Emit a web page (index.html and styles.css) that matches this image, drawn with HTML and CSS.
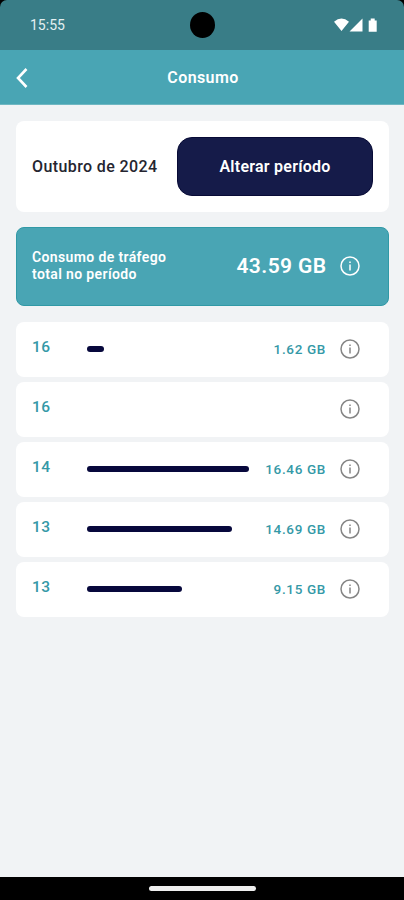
FILE: index.html
```
<!DOCTYPE html>
<html lang="pt">
<head>
<meta charset="utf-8">
<title>Consumo</title>
<link rel="stylesheet" href="styles.css">
</head>
<body>
<svg class="defs" width="0" height="0">
  <symbol id="info" viewBox="0 0 20 20">
    <circle cx="10" cy="10" r="9" fill="none" stroke="currentColor" stroke-width="1.5"/>
    <path d="M10 8.600v5.800M10 5.400v1.700" fill="none" stroke="currentColor" stroke-width="1.5"/>
  </symbol>
</svg>
<div class="screen">
  <div class="status">
    <span class="time">15:55</span>
    <span class="camera"></span>
    <svg class="signals" width="44" height="16" viewBox="0 0 44 16">
      <path d="M0 4.700Q7.500-1.700 15 4.700L7.500 13.900ZM15.500 14.500 28.500 1.500V14.500ZM34.700 3.400h2V1.400h4v2h2v11.400h-8Z" fill="#fff"/>
    </svg>
  </div>
  <header class="header">
    <svg class="back" width="12" height="20" viewBox="0 0 12 20"><path d="M10.500 1 2 10l8.500 9" fill="none" stroke="#fff" stroke-width="2.600"/></svg>
    <h1 class="title">Consumo</h1>
  </header>
  <main class="content">
    <section class="period">
      <span class="month">Outubro de 2024</span>
      <button class="change">Alterar período</button>
    </section>
    <section class="total">
      <span class="label">Consumo de tráfego<br>total no período</span>
      <span class="sum">43.59 GB</span>
      <svg class="info"><use href="#info"/></svg>
    </section>
    <section class="days">
      <div class="day"><span class="num">16</span><span class="track"><span class="bar" style="width:17px"></span></span><span class="gb">1.62 GB</span><svg class="info"><use href="#info"/></svg></div>
      <div class="day"><span class="num">16</span><span class="track"></span><span class="gb"></span><svg class="info"><use href="#info"/></svg></div>
      <div class="day"><span class="num">14</span><span class="track"><span class="bar" style="width:162px"></span></span><span class="gb">16.46 GB</span><svg class="info"><use href="#info"/></svg></div>
      <div class="day"><span class="num">13</span><span class="track"><span class="bar" style="width:145px"></span></span><span class="gb">14.69 GB</span><svg class="info"><use href="#info"/></svg></div>
      <div class="day"><span class="num">13</span><span class="track"><span class="bar" style="width:95px"></span></span><span class="gb">9.15 GB</span><svg class="info"><use href="#info"/></svg></div>
    </section>
  </main>
  <div class="nav"><span class="handle"></span></div>
</div>
</body>
</html>
```
FILE: styles.css
```
* { box-sizing: border-box; }
body { margin: 0; background: #000; font-family: Roboto, sans-serif; }
.defs { display: block; }
.screen { width: 404px; height: 900px; display: flex; flex-direction: column; overflow: hidden; border-radius: 7px 7px 0 0; }
.status { position: relative; height: 50px; flex: none; background: #397d87; display: flex; align-items: center; justify-content: space-between; padding: 0 26px 0 30px; }
.time { color: #e4f0f2; font-size: 14px; font-weight: 400; }
.camera { position: absolute; left: 190px; top: 12px; width: 25px; height: 26px; border-radius: 50%; background: #000; }
.header { height: 55px; flex: none; background: #49a5b4; border-bottom: 1px solid #70b7c2; display: flex; align-items: center; padding: 1px 16px 0; }
.title { flex: 1; margin: 0 13px 0 3px; text-align: center; color: #fff; font-size: 16px; font-weight: 600; letter-spacing: 0.4px; }
.content { flex: 1; background: #f1f3f5; padding: 16px 15px 0 16px; }
.period { height: 91px; background: #fff; border-radius: 8px; display: flex; align-items: center; justify-content: space-between; padding: 0 16px; }
.month { color: #252530; font-size: 16px; font-weight: 500; letter-spacing: 0.4px; }
.change { width: 196px; height: 59px; border: 1px solid #080b36; border-radius: 15px; background: #151b49; color: #fff; font: 600 16px Roboto, sans-serif; letter-spacing: 0.25px; padding: 0; }
.total { height: 79px; margin-top: 15px; background: #49a5b4; border: 1px solid #3199a6; border-radius: 8px; color: #fff; display: flex; align-items: center; padding: 0 28px 1px 15px; }
.label { flex: 1; font-size: 14px; line-height: 17.5px; font-weight: 600; letter-spacing: 0.37px; }
.sum { font-size: 21px; font-weight: 600; letter-spacing: 0.4px; margin-right: 13.5px; }
.info { width: 20px; height: 20px; flex: none; }
.days { margin-top: 16px; display: flex; flex-direction: column; gap: 5px; }
.day { height: 55px; background: #fff; border-radius: 8px; display: flex; align-items: center; padding: 0 29px 0.5px 16px; color: #858585; }
.num { width: 55px; margin-top: -4px; color: #3599a7; font-size: 15.5px; font-weight: 500; letter-spacing: 0.4px; }
.track { flex: 1; }
.bar { display: block; height: 6px; border-radius: 3px; background: #07083c; }
.gb { color: #3599a7; font-size: 13.5px; font-weight: 500; letter-spacing: 0.65px; margin: -1px 14px 0 0; }
.nav { height: 23px; flex: none; background: #000; display: flex; justify-content: center; align-items: center; }
.handle { width: 107px; height: 5px; border-radius: 3px; background: #eee; }
```
